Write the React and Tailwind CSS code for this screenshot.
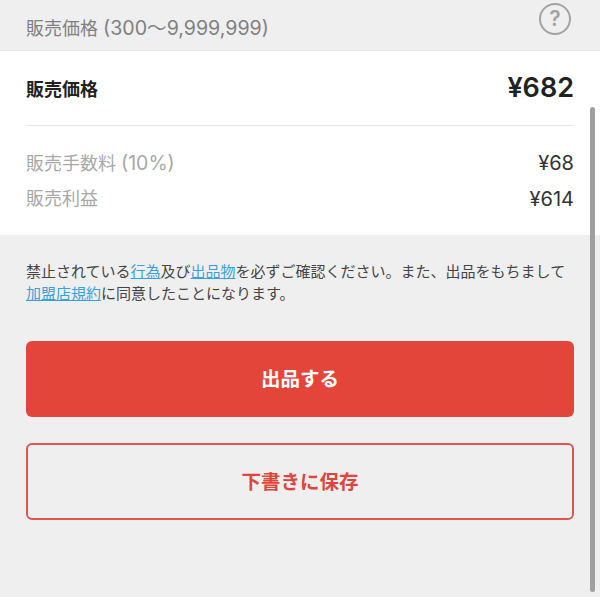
const fontStack = { fontFamily: '"Inter", "Noto Sans CJK JP", sans-serif' }

function Notice() {
  return (
    <p className="px-[26px] pt-[26px] text-[15px] leading-[22px] text-[#444444]">
      禁止されている<a className="text-[#3aa0dc] underline">行為</a>及び<a className="text-[#3aa0dc] underline">出品物</a>を必ずご確認ください。また、出品をもちまして
      <br />
      <a className="text-[#3aa0dc] underline">加盟店規約</a>に同意したことになります。
    </p>
  )
}

function App() {
  return (
    <div className="relative w-[600px] h-[597px] overflow-hidden bg-[#efefef]" style={fontStack}>
      <div className="h-[51px] flex items-start justify-between pl-[26px] pr-[29px] border-b border-[#e8e8e8]">
        <span className="text-[18px] leading-[26px] pt-[15px] text-[#808080]">
          販売価格 <span className="text-[19.6px]">(300～9,999,999)</span>
        </span>
        <div className="w-[32px] h-[32px] mt-[3px] rounded-full border-2 border-[#a3a3a3] flex items-center justify-center text-[21px] font-semibold text-[#a3a3a3]">?</div>
      </div>

      <div className="bg-white h-[184px] px-[26px]">
        <div className="h-[75px] flex items-center justify-between border-b border-[#e6e6e6]">
          <span className="text-[18px] font-bold text-[#222222] mt-[2px]">販売価格</span>
          <span className="text-[27px] font-semibold text-[#222222]">¥682</span>
        </div>
        <div className="pt-[24px] flex flex-col gap-[9px] text-[18px] leading-[26px]">
          <div className="flex justify-between">
            <span className="text-[#a8a8a8]">販売手数料 <span className="text-[19.5px]">(10%)</span></span>
            <span className="text-[#333333] text-[20px]">¥68</span>
          </div>
          <div className="flex justify-between">
            <span className="text-[#a8a8a8]">販売利益</span>
            <span className="text-[#333333] text-[20px]">¥614</span>
          </div>
        </div>
      </div>

      <Notice />

      <div className="px-[26px] pt-[36px] flex flex-col gap-[26px]">
        <button className="h-[76px] pt-[2px] rounded-[6px] bg-[#e4453b] text-white text-[19.5px] font-bold">出品する</button>
        <button className="h-[77px] pt-[2px] rounded-[6px] border-2 border-[#e0554c] text-[#e0453c] text-[19.5px] font-bold">下書きに保存</button>
      </div>

      <div className="absolute left-[590px] top-[107px] w-[5px] h-[485px] rounded-full bg-[#a0a0a0]"></div>
    </div>
  )
}

export default App
